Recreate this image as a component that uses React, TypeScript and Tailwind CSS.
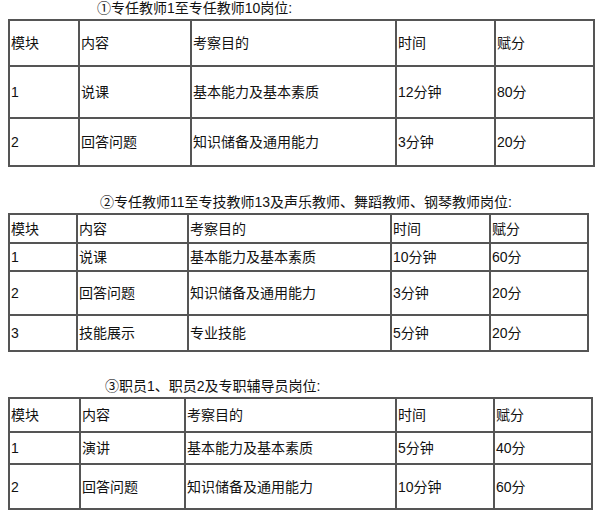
type Row = string[]

type Section = {
  title: string
  titleIndent: string
  tableWidth: string
  colWidths: string[]
  rowHeights: string[]
  rows: Row[]
  gapTop: string
}

const header: Row = ["模块", "内容", "考察目的", "时间", "赋分"]

const sections: Section[] = [
  {
    title: "①专任教师1至专任教师10岗位:",
    titleIndent: "pl-[89px]",
    tableWidth: "w-[585px]",
    colWidths: ["w-[70px]", "w-[112px]", "w-[205px]", "w-[99px]", "w-[99px]"],
    rowHeights: ["h-[46px]", "h-[52px]", "h-[48px]"],
    rows: [header, ["1", "说课", "基本能力及基本素质", "12分钟", "80分"], ["2", "回答问题", "知识储备及通用能力", "3分钟", "20分"]],
    gapTop: "mt-0",
  },
  {
    title: "②专任教师11至专技教师13及声乐教师、舞蹈教师、钢琴教师岗位:",
    titleIndent: "pl-[92px]",
    tableWidth: "w-[579px]",
    colWidths: ["w-[68px]", "w-[111px]", "w-[203px]", "w-[99px]", "w-[98px]"],
    rowHeights: ["h-[29px]", "h-[28px]", "h-[44px]", "h-[36px]"],
    rows: [
      header,
      ["1", "说课", "基本能力及基本素质", "10分钟", "60分"],
      ["2", "回答问题", "知识储备及通用能力", "3分钟", "20分"],
      ["3", "技能展示", "专业技能", "5分钟", "20分"],
    ],
    gapTop: "mt-[27px]",
  },
  {
    title: "③职员1、职员2及专职辅导员岗位:",
    titleIndent: "pl-[97px]",
    tableWidth: "w-[583px]",
    colWidths: ["w-[71px]", "w-[105px]", "w-[211px]", "w-[98px]", "w-[98px]"],
    rowHeights: ["h-[34px]", "h-[32px]", "h-[45px]"],
    rows: [header, ["1", "演讲", "基本能力及基本素质", "5分钟", "40分"], ["2", "回答问题", "知识储备及通用能力", "10分钟", "60分"]],
    gapTop: "mt-[26px]",
  },
]

function ScoreTable({ section }: { section: Section }) {
  return (
    <div className={section.gapTop}>
      <p className={`${section.titleIndent} h-[19px] text-[14px] leading-[17px] text-[#111]`}>{section.title}</p>
      <table className={`${section.tableWidth} table-fixed border-collapse border-2 border-[#555]`}>
        <colgroup>
          {section.colWidths.map((w, i) => (
            <col key={i} className={w} />
          ))}
        </colgroup>
        <tbody>
          {section.rows.map((row, r) => (
            <tr key={r} className={section.rowHeights[r]}>
              {row.map((cell, c) => (
                <td key={c} className="border-2 border-[#555] px-[1px] py-0 text-left align-middle text-[14px] leading-[18px] text-[#111]">
                  {cell}
                </td>
              ))}
            </tr>
          ))}
        </tbody>
      </table>
    </div>
  )
}

export default function App() {
  return (
    <div className="min-h-[512px] w-[603px] bg-white pl-[8px] font-['Liberation_Sans','Noto_Sans_CJK_SC',sans-serif]">
      {sections.map((s, i) => (
        <ScoreTable key={i} section={s} />
      ))}
    </div>
  )
}
